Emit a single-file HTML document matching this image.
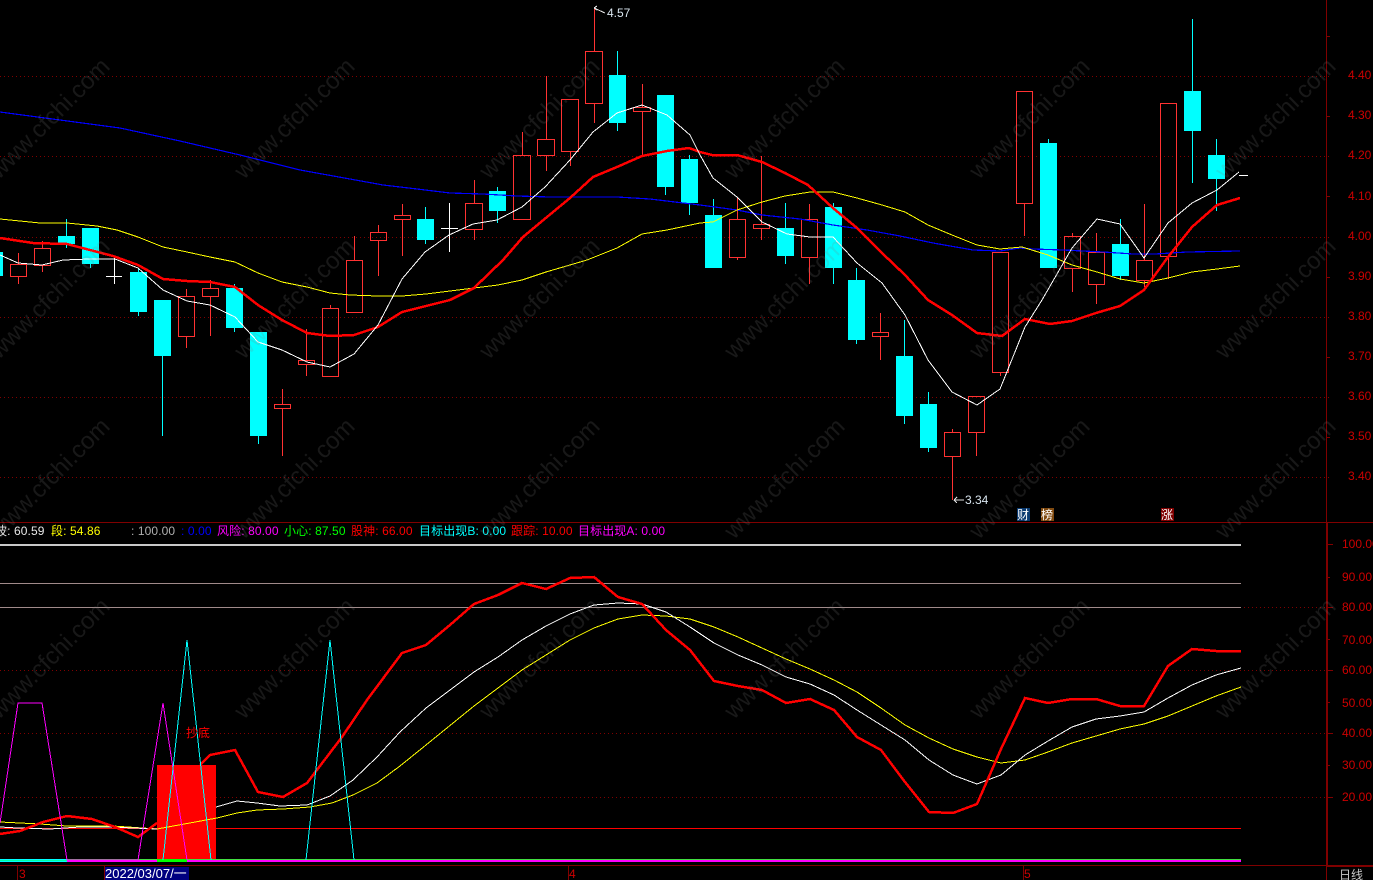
<!DOCTYPE html>
<html><head><meta charset="utf-8"><title>K线图</title>
<style>
html,body{margin:0;padding:0;background:#000;width:1373px;height:880px;overflow:hidden}
svg{display:block;position:absolute;left:0;top:0}
text{font-family:"Liberation Sans","Noto Sans CJK SC",sans-serif;font-size:12px}
.ln{fill:none;shape-rendering:crispEdges}
.ax text{fill:#cc0000}
.lg text{letter-spacing:.1px}
.wm text{font-size:24px;fill:#808080;opacity:.19}
</style></head><body>
<svg width="1373" height="880" viewBox="0 0 1373 880" xmlns="http://www.w3.org/2000/svg">
<!-- grids -->
<g fill="none" stroke="#800000" stroke-dasharray="1 3">
<path d="M0 76.5H1332M0 156.5H1332M0 237.5H1332M0 317.5H1332M0 397.5H1332M0 477.5H1332"/>
<path d="M0 607.5H1327M0 670.5H1327M0 733.5H1327M0 797.5H1327"/>
</g>
<!-- red candles -->
<path class="ln" stroke="#ff3232" d="
M18.5 253V264M18.5 276V284M10.5 264.5h16v12h-16z
M42.5 241V248M42.5 265V272M34.5 248.5h16v17h-16z
M186.5 289V296M186.5 336V348M178.5 296.5h16v40h-16z
M210.5 280V288M210.5 296V336M202.5 288.5h16v8h-16z
M282.5 389V404M282.5 408V456M274.5 404.5h16v4h-16z
M306.5 329V360M306.5 364V376M298.5 360.5h16v4h-16z
M330.5 305V308M322.5 308.5h16v68h-16z
M354.5 236V260M346.5 260.5h16v52h-16z
M378.5 225V232M378.5 240V276M370.5 232.5h16v8h-16z
M402.5 204V215M402.5 219V256M394.5 215.5h16v4h-16z
M474.5 180V203M474.5 229V240M465.5 203.5h17v26h-17z
M522.5 132V155M513.5 155.5h17v64h-17z
M546.5 76V139M546.5 155V171M537.5 139.5h17v16h-17z
M570.5 151V166M561.5 99.5h17v52h-17z
M594.5 7V51M594.5 103V123M585.5 51.5h17v52h-17z
M642.5 84V107M642.5 111V155M633.5 107.5h17v4h-17z
M737.5 198V219M737.5 257V260M729.5 219.5h16v38h-16z
M761.5 156V224M761.5 229V240M753.5 224.5h16v4h-16z
M809.5 204V219M809.5 257V284M801.5 219.5h16v38h-16z
M880.5 313V332M880.5 337V360M872.5 332.5h16v4h-16z
M952.5 429V432M952.5 457V500M944.5 432.5h16v24h-16z
M976.5 432V456M968.5 396.5h16v36h-16z
M1000.5 372V376M992.5 252.5h16v120h-16z
M1024.5 203V236M1016.5 91.5h16v112h-16z
M1072.5 233V236M1072.5 268V292M1064.5 236.5h16v32h-16z
M1096.5 233V252M1096.5 284V304M1088.5 252.5h16v32h-16z
M1144.5 204V260M1144.5 280V287M1136.5 260.5h16v20h-16z
M1168.5 256V279M1160.5 103.5h16v153h-16z"/>
<!-- cyan candle wicks -->
<path class="ln" stroke="#00ffff" d="M66.5 219V248M90.5 264V268M138.5 268V316M162.5 300V436M234.5 284V332M258.5 332V444M425.5 207V244M497.5 187V223M617.5 51V131M665.5 95V195M689.5 155V215M713.5 199V268M785.5 203V264M833.5 203V284M856.5 268V344M904.5 320V424M928.5 392V452M1048.5 139V268M1120.5 219V280M1192.5 19V183M1216.5 139V211"/>
<!-- cyan bodies -->
<path fill="#00ffff" shape-rendering="crispEdges" d="M0 252h3v24h-3zM58 236h17v8h-17zM82 228h17v36h-17zM130 272h17v40h-17zM154 300h17v56h-17zM226 288h17v40h-17zM250 332h17v104h-17zM417 219h17v21h-17zM489 191h17v20h-17zM609 75h17v48h-17zM657 95h17v92h-17zM681 159h17v44h-17zM705 215h17v53h-17zM777 228h17v28h-17zM825 207h17v61h-17zM848 280h17v60h-17zM896 356h17v60h-17zM920 404h17v44h-17zM1040 143h17v125h-17zM1112 244h17v32h-17zM1184 91h17v40h-17zM1208 155h17v24h-17z"/>
<!-- white doji -->
<path class="ln" stroke="#fff" d="M106 276.5H122M114.5 258V284M441 228.5H458M449.5 203V252M1239 175.5H1248"/>
<!-- main MAs -->
<polyline class="ln" stroke="#0000ff" stroke-width="1.2" points="0,112 60,120 120,128 180,141 240,155 300,170 350,179 383,185 417,189 450,193 483,194 517,196 550,197 583,197 617,197 650,199 700,205 737,210 762,215 800,219 833,225 867,230 900,236 933,243 973,250 1000,251 1020,248 1033,249 1063,250 1103,252 1133,254 1155,254 1187,252 1240,251"/>
<polyline class="ln" stroke="#ffff00" points="0,219 40,223 67,223 97,226 117,230 138,237 163,247 187,252 210,257 235,262 258,273 282,282 307,287 330,293 350,295 378,296 402,296 426,294 450,291 474,288 498,285 522,280 546,272 587,260 617,248 642,234 667,230 700,223 713,222 737,210 762,202 785,196 810,192 833,192 857,198 882,205 905,212 928,225 952,235 977,245 1000,249 1022,247 1048,255 1072,265 1097,272 1120,279 1144,283 1168,278 1192,272 1217,269 1240,266"/>
<polyline class="ln" stroke="#ff0000" stroke-width="2.5" points="0,238 33,243 67,244 90,250 113,256 138,265 163,279 187,281 210,282 235,287 258,305 282,320 307,333 330,336 354,335 378,327 402,312 426,306 450,300 474,288 503,260 523,237 547,217 570,198 593,177 617,167 642,156 667,151 689,148 700,152 712,155 737,155 762,162 785,173 808,185 833,208 857,228 882,253 905,275 928,300 952,315 977,333 1002,336 1025,319 1050,324 1072,321 1096,313 1120,306 1144,290 1168,257 1192,227 1217,205 1240,198"/>
<polyline class="ln" stroke="#ffffff" points="0,255 18,263 42,265 63,260 90,259 115,259 138,268 163,290 187,301 210,305 235,317 258,342 282,350 307,362 330,367 354,354 378,325 402,279 425,252 449,235 473,224 497,220 522,207 545,187 570,160 593,132 617,113 642,105 667,115 690,135 700,155 713,178 737,197 762,222 787,234 810,237 833,237 857,263 882,283 905,315 928,360 952,392 977,405 1000,389 1025,327 1042,300 1072,248 1097,219 1120,224 1144,258 1168,223 1192,203 1217,190 1239,172"/>
<!-- high / low labels -->
<path class="ln" stroke="#e0e0e0" d="M594 8L605 13M594 8L597 6M594 8L597 10M954 500H964M954 500L957 497M954 500L957 503"/>
<text x="607" y="17" fill="#d8e4ee">4.57</text>
<text x="965" y="504" fill="#d8e4ee">3.34</text>
<!-- badges -->
<rect x="1017" y="508" width="13" height="13" fill="#0a3a70"/><text x="1017" y="519" fill="#fff">财</text>
<rect x="1041" y="508" width="13" height="13" fill="#804a10"/><text x="1041" y="519" fill="#fff">榜</text>
<rect x="1161" y="508" width="13" height="13" fill="#800000"/><text x="1161" y="519" fill="#fff">涨</text>
<!-- indicator legend -->
<g class="lg">
<text x="-5" y="535" fill="#e8e8e8">波: 60.59</text>
<text x="51" y="535" fill="#ffff00">段: 54.86</text>
<text x="131" y="535" fill="#b0b0b0">: 100.00</text>
<text x="181" y="535" fill="#0000ff">: 0.00</text>
<text x="217" y="535" fill="#ff00ff">风险: 80.00</text>
<text x="284" y="535" fill="#00ff00">小心: 87.50</text>
<text x="351" y="535" fill="#ff0000">股神: 66.00</text>
<text x="419" y="535" fill="#00ffff">目标出现B: 0.00</text>
<text x="511" y="535" fill="#ff0000">跟踪: 10.00</text>
<text x="578" y="535" fill="#ff00ff">目标出现A: 0.00</text>
</g>
<!-- lower pane -->
<path class="ln" stroke="#c8c8c8" stroke-width="2" d="M0 545H1241"/>
<path class="ln" stroke="#a08a8a" d="M0 583.5H1241M0 607.5H1241"/>
<path class="ln" stroke="#ff0000" d="M0 828.5H1241"/>
<rect x="157" y="765" width="59" height="95" fill="#ff0000" shape-rendering="crispEdges"/>
<polyline class="ln" stroke="#ffff00" points="0,822 40,824 67,826 113,826 157,829 217,818 237,813 257,810 283,809 310,807 332,803 353,795 377,783 400,766 426,745 474,706 522,670 570,640 594,628 618,619 642,615 666,616 690,619 714,627 738,637 762,648 786,659 810,669 834,680 857,692 881,708 905,725 929,738 953,749 977,757 1001,763 1025,760 1048,752 1072,743 1096,736 1120,729 1144,724 1168,716 1192,706 1216,696 1241,687"/>
<polyline class="ln" stroke="#ffffff" points="0,827 17,828 50,829 80,827 110,827 157,829"/>
<polyline class="ln" stroke="#ffffff" points="216,807 237,801 257,803 280,806 307,805 330,796 353,780 377,757 400,732 426,708 450,690 474,672 498,657 522,640 546,626 570,614 594,605 618,603 642,604 666,612 690,627 714,643 738,655 762,665 786,677 810,684 834,695 857,710 881,725 905,740 929,760 953,775 977,784 1001,775 1025,755 1048,741 1072,727 1096,719 1120,716 1144,712 1168,698 1192,685 1216,675 1241,668"/>
<polyline class="ln" stroke="#ff0000" stroke-width="2.5" points="0,834 20,831 43,822 67,816 92,819 115,827 138,837 157,823"/>
<polyline class="ln" stroke="#ff0000" stroke-width="2.5" points="200,765 210,755 235,750 258,792 283,797 307,783 342,737 367,700 402,653 426,645 450,625 474,604 498,595 522,583 546,589 570,578 594,577 618,597 642,604 666,630 690,650 714,681 738,686 762,690 786,703 810,699 834,710 857,737 881,750 905,782 929,812 953,813 977,804 1001,749 1025,698 1048,703 1072,699 1096,699 1120,706 1144,706 1168,666 1192,649 1216,651 1241,651"/>
<rect x="0" y="859" width="67" height="3" fill="#00ffff" shape-rendering="crispEdges"/>
<rect x="0" y="860" width="67" height="1" fill="#00ffa0" shape-rendering="crispEdges"/>
<rect x="67" y="859" width="90" height="1" fill="#40e040" shape-rendering="crispEdges"/>
<rect x="67" y="860" width="90" height="2" fill="#ff00ff" shape-rendering="crispEdges"/>
<rect x="157" y="859" width="30" height="3" fill="#00ff00" shape-rendering="crispEdges"/>
<rect x="187" y="859" width="1054" height="1" fill="#40e040" shape-rendering="crispEdges"/>
<rect x="187" y="860" width="1054" height="2" fill="#ff00ff" shape-rendering="crispEdges"/>
<polyline class="ln" stroke="#ff00ff" points="0,823 18,703 42,703 67,860 138,860 163,703 187,860"/>
<polyline class="ln" stroke="#00ffff" points="163,860 187,640 211,860"/>
<polyline class="ln" stroke="#00ffff" points="306,860 330,640 354,860"/>
<text x="186" y="737" fill="#ff0000">抄底</text>
<!-- frame -->
<path class="ln" stroke="#800000" d="M0 522.5H1373M0 865.5H1373M1326.5 0V880"/>
<path class="ln" stroke="#800000" d="M1327.5 523V866M1327 866.5H1373"/>
<path class="ln" stroke="#800000" d="M1327 36.5h3M1327 116.5h3M1327 196.5h3M1327 277.5h3M1327 357.5h3M1327 437.5h3M1328 544.5h5M1328 577.5h2M1328 607.5h5M1328 639.5h2M1328 670.5h5M1328 702.5h2M1328 733.5h5M1328 765.5h2M1328 797.5h5M17.5 866V880M104.5 866V880M568.5 866V880M1023.5 866V880"/>
<!-- axis labels -->
<g class="ax">
<text x="1348" y="79">4.40</text><text x="1348" y="119">4.30</text><text x="1348" y="159">4.20</text><text x="1348" y="200">4.10</text><text x="1348" y="240">4.00</text><text x="1348" y="280">3.90</text><text x="1348" y="320">3.80</text><text x="1348" y="360">3.70</text><text x="1348" y="400">3.60</text><text x="1348" y="440">3.50</text><text x="1348" y="480">3.40</text>
<text x="1342" y="548">100.00</text><text x="1342" y="581">90.00</text><text x="1342" y="611">80.00</text><text x="1342" y="644">70.00</text><text x="1342" y="674">60.00</text><text x="1342" y="707">50.00</text><text x="1342" y="737">40.00</text><text x="1342" y="769">30.00</text><text x="1342" y="801">20.00</text>
<text x="19" y="878">3</text><text x="569" y="878">4</text><text x="1024" y="878">5</text>
</g>
<rect x="105" y="867" width="84" height="13" fill="#000080"/>
<text x="105" y="878" fill="#ffffff" style="font-size:13px">2022/03/07/一</text>
<text x="1339" y="879" fill="#c8c8c8">日线</text>
<!-- watermark -->
<g class="wm" text-anchor="middle">
<text transform="translate(55,124) rotate(-45)">www.cfchi.com</text><text transform="translate(300,124) rotate(-45)">www.cfchi.com</text><text transform="translate(545,124) rotate(-45)">www.cfchi.com</text><text transform="translate(790,124) rotate(-45)">www.cfchi.com</text><text transform="translate(1035,124) rotate(-45)">www.cfchi.com</text><text transform="translate(1281,124) rotate(-45)">www.cfchi.com</text>
<text transform="translate(55,304) rotate(-45)">www.cfchi.com</text><text transform="translate(300,304) rotate(-45)">www.cfchi.com</text><text transform="translate(545,304) rotate(-45)">www.cfchi.com</text><text transform="translate(790,304) rotate(-45)">www.cfchi.com</text><text transform="translate(1035,304) rotate(-45)">www.cfchi.com</text><text transform="translate(1281,304) rotate(-45)">www.cfchi.com</text>
<text transform="translate(55,484) rotate(-45)">www.cfchi.com</text><text transform="translate(300,484) rotate(-45)">www.cfchi.com</text><text transform="translate(545,484) rotate(-45)">www.cfchi.com</text><text transform="translate(790,484) rotate(-45)">www.cfchi.com</text><text transform="translate(1035,484) rotate(-45)">www.cfchi.com</text><text transform="translate(1281,484) rotate(-45)">www.cfchi.com</text>
<text transform="translate(55,664) rotate(-45)">www.cfchi.com</text><text transform="translate(300,664) rotate(-45)">www.cfchi.com</text><text transform="translate(545,664) rotate(-45)">www.cfchi.com</text><text transform="translate(790,664) rotate(-45)">www.cfchi.com</text><text transform="translate(1035,664) rotate(-45)">www.cfchi.com</text><text transform="translate(1281,664) rotate(-45)">www.cfchi.com</text>
</g>
</svg>
</body></html>
